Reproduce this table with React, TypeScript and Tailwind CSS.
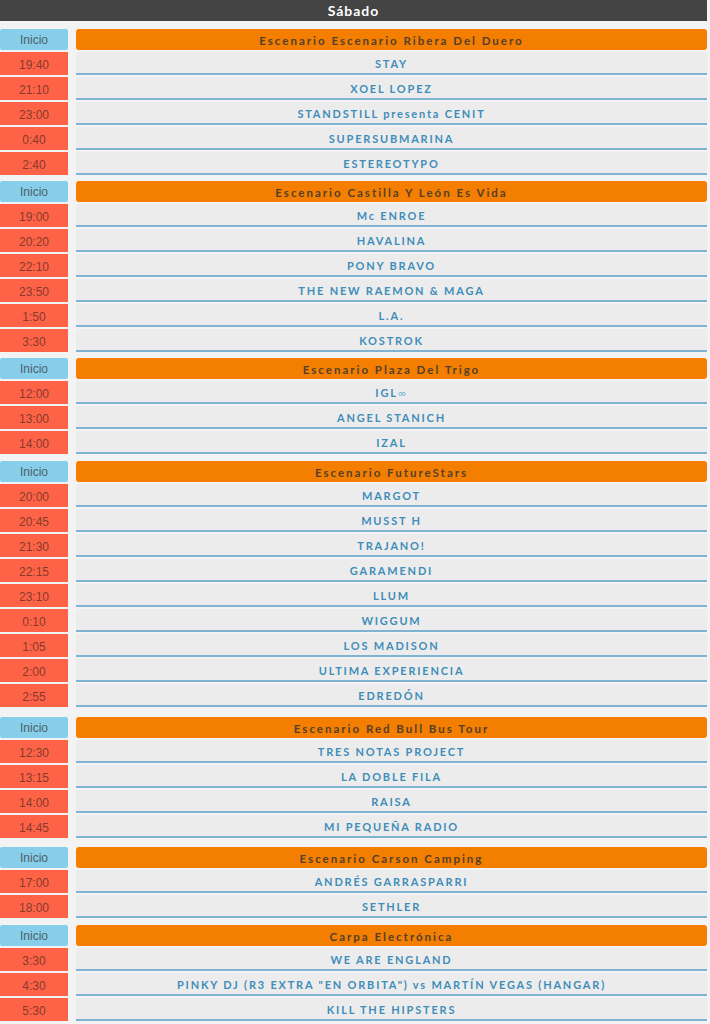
import React from "react";

type Row = [string, React.ReactNode];
type Section = { stage: string; mt: string; rows: Row[] };

const sections: Section[] = [
  {
    stage: "Escenario Escenario Ribera Del Duero",
    mt: "mt-[8px]",
    rows: [
      ["19:40", "STAY"],
      ["21:10", "XOEL LOPEZ"],
      ["23:00", "STANDSTILL presenta CENIT"],
      ["0:40", "SUPERSUBMARINA"],
      ["2:40", "ESTEREOTYPO"],
    ],
  },
  {
    stage: "Escenario Castilla Y León Es Vida",
    mt: "mt-[6px]",
    rows: [
      ["19:00", "Mc ENROE"],
      ["20:20", "HAVALINA"],
      ["22:10", "PONY BRAVO"],
      ["23:50", "THE NEW RAEMON & MAGA"],
      ["1:50", "L.A."],
      ["3:30", "KOSTROK"],
    ],
  },
  {
    stage: "Escenario Plaza Del Trigo",
    mt: "mt-[6px]",
    rows: [
      [
        "12:00",
        <span>
          IGL<span className="font-normal text-[#7fb5d5]">∞</span>
        </span>,
      ],
      ["13:00", "ANGEL STANICH"],
      ["14:00", "IZAL"],
    ],
  },
  {
    stage: "Escenario FutureStars",
    mt: "mt-[7px]",
    rows: [
      ["20:00", "MARGOT"],
      ["20:45", "MUSST H"],
      ["21:30", "TRAJANO!"],
      ["22:15", "GARAMENDI"],
      ["23:10", "LLUM"],
      ["0:10", "WIGGUM"],
      ["1:05", "LOS MADISON"],
      ["2:00", "ULTIMA EXPERIENCIA"],
      ["2:55", "EDREDÓN"],
    ],
  },
  {
    stage: "Escenario Red Bull Bus Tour",
    mt: "mt-[10px]",
    rows: [
      ["12:30", "TRES NOTAS PROJECT"],
      ["13:15", "LA DOBLE FILA"],
      ["14:00", "RAISA"],
      ["14:45", "MI PEQUEÑA RADIO"],
    ],
  },
  {
    stage: "Escenario Carson Camping",
    mt: "mt-[9px]",
    rows: [
      ["17:00", "ANDRÉS GARRASPARRI"],
      ["18:00", "SETHLER"],
    ],
  },
  {
    stage: "Carpa Electrónica",
    mt: "mt-[7px]",
    rows: [
      ["3:30", "WE ARE ENGLAND"],
      ["4:30", 'PINKY DJ (R3 EXTRA "EN ORBITA") vs MARTÍN VEGAS (HANGAR)'],
      ["5:30", "KILL THE HIPSTERS"],
    ],
  },
];

function SectionBlock({ s }: { s: Section }) {
  return (
    <div className={`${s.mt} flex flex-col gap-[2px]`}>
      <div className="grid grid-cols-[68px_1fr] gap-x-[8px] h-[21px]">
        <div className="bg-[#87ceeb] rounded-[2px] flex items-center justify-center pt-[1px] text-[12px] text-[#4f5f68] font-['Liberation_Sans',Arial,sans-serif]">
          Inicio
        </div>
        <div className="bg-[#f37e00] rounded-[3px] flex items-center justify-center pt-[2px] text-[11.5px] font-bold tracking-[2px] text-[#55402c] font-['Lato','Open_Sans',sans-serif]">
          {s.stage}
        </div>
      </div>
      {s.rows.map(([t, name], i) => (
        <div key={i} className="grid grid-cols-[68px_1fr] gap-x-[8px] h-[23px]">
          <div className="bg-[#ff6347] flex items-center justify-center pt-[2px] text-[12px] text-[#863a2c] font-['Liberation_Sans',Arial,sans-serif]">
            {t}
          </div>
          <div className="bg-[#ececec] border-b-[2px] border-[#7fb3d2] flex items-center justify-center pt-[3px] text-[11px] font-bold tracking-[1.8px] text-[#3f8dba] font-['Lato','Open_Sans',sans-serif]">
            {name}
          </div>
        </div>
      ))}
    </div>
  );
}

export default function App() {
  return (
    <div className="w-[710px] min-h-[1024px] bg-[#f3f3f3]">
      <div className="w-[707px]">
        <div className="h-[21px] bg-[#444444] flex items-center justify-center text-white text-[14px] font-bold tracking-[1px] font-['Lato','Open_Sans',sans-serif]">
          Sábado
        </div>
        {sections.map((s, i) => (
          <SectionBlock key={i} s={s} />
        ))}
      </div>
    </div>
  );
}
